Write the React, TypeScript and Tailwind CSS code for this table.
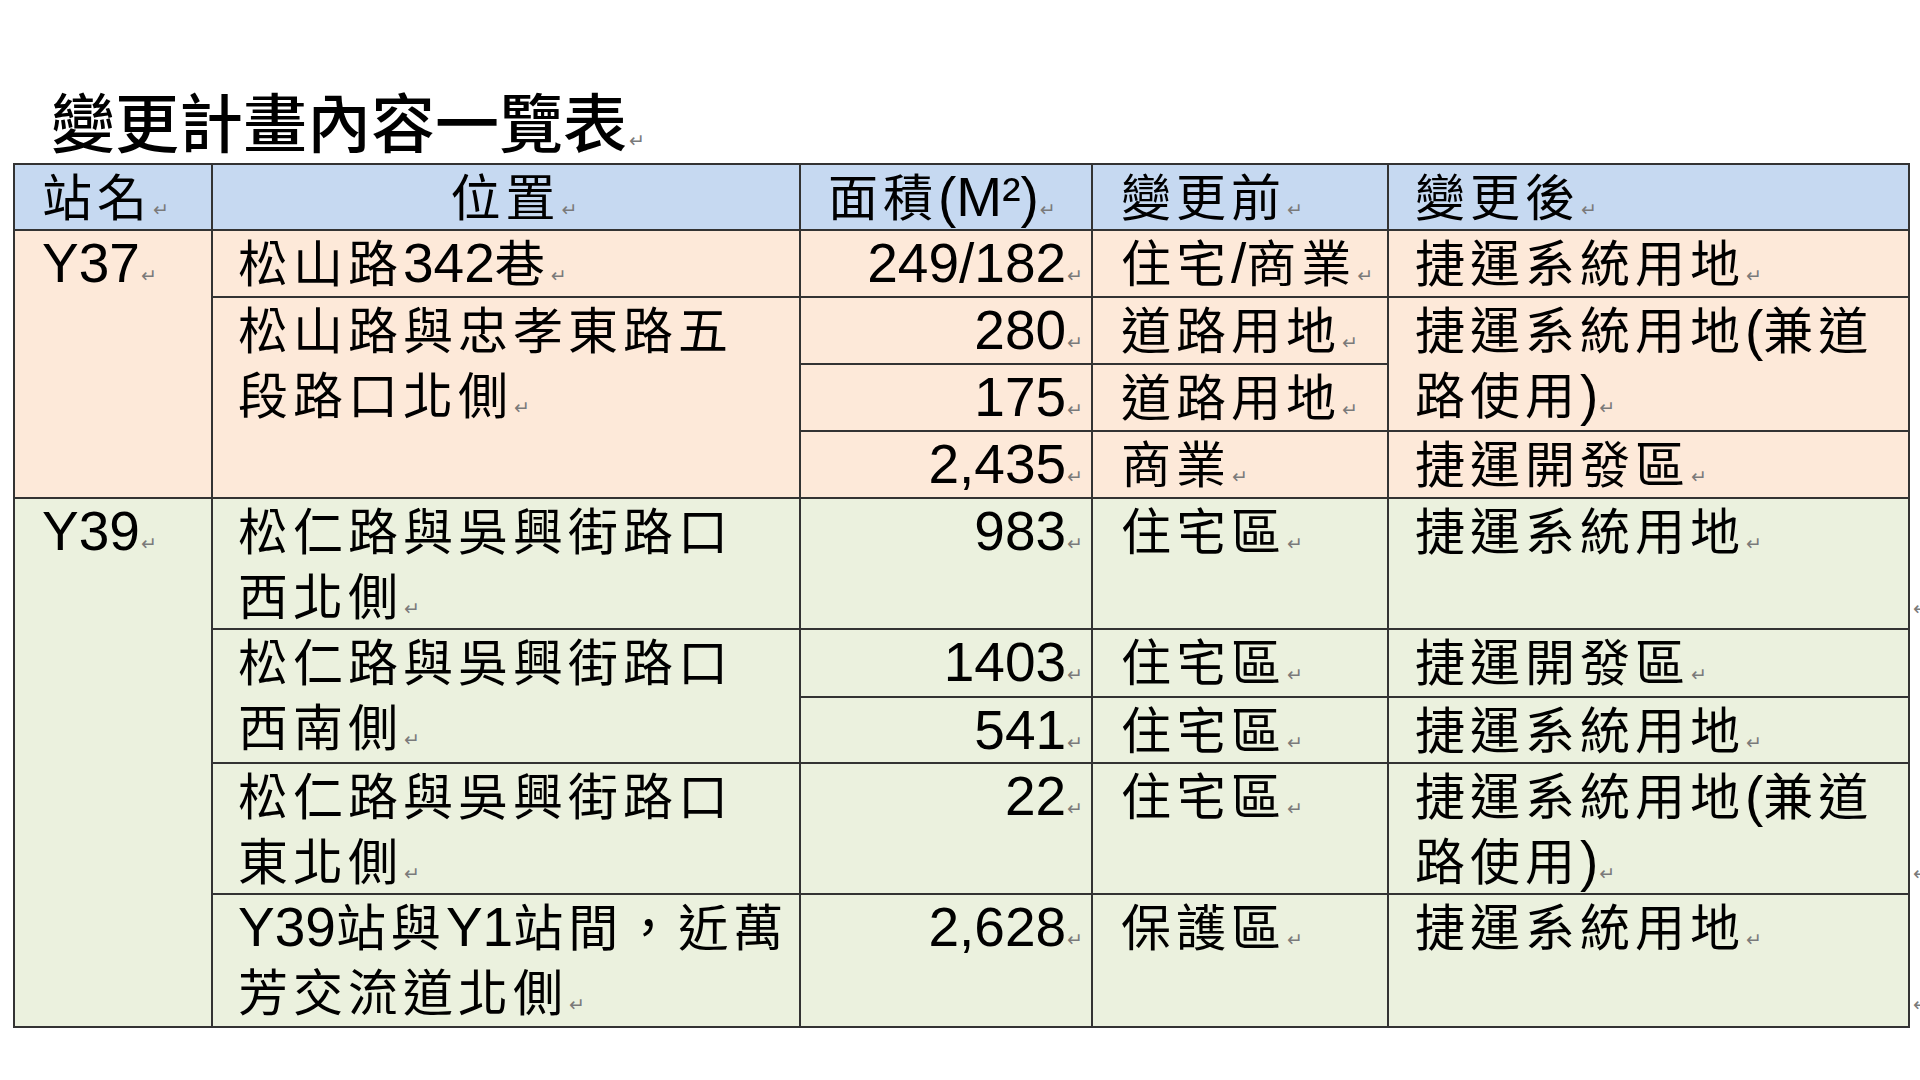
import React from "react";

const CJK = /([\u2E80-\u9FFF\uF900-\uFAFF\uFF00-\uFFEF\u3000-\u303F]+)/;

function Txt({ s }: { s: string }) {
  const parts = s.split(CJK).filter((p) => p.length > 0);
  return (
    <>
      {parts.map((p, i) =>
        CJK.test(p) ? (
          <span key={i} className="text-[50px] tracking-[5px] leading-none">
            {p}
          </span>
        ) : (
          <span key={i}>{p}</span>
        )
      )}
    </>
  );
}

function Mark() {
  return (
    <span className="ml-[1px] align-baseline text-[19px] leading-none text-[#7a7a7a] font-['DejaVu_Sans',sans-serif]">
      ↵
    </span>
  );
}

function Cell({
  className,
  lines,
}: {
  className: string;
  lines: string[];
}) {
  return (
    <div
      className={
        "border-l-2 border-t-2 border-[#333] text-[55px] leading-[65px] text-black overflow-hidden whitespace-nowrap " +
        className
      }
    >
      {lines.map((l, i) => (
        <div key={i}>
          <Txt s={l} />
          {i === lines.length - 1 && <Mark />}
        </div>
      ))}
    </div>
  );
}

export default function App() {
  const pink = "bg-[#fde9d9]";
  const green = "bg-[#ebf1de]";
  const head = "bg-[#c6d9f1]";
  return (
    <div className="w-[1920px] h-[1080px] bg-white overflow-hidden font-['Liberation_Sans','Noto_Sans_CJK_TC',sans-serif]">
      <div className="pt-[83px] pl-[51px]">
        <div className="h-[72px] text-[64px] leading-[72px] font-medium text-black font-['Noto_Sans_CJK_TC',sans-serif]">
          變更計畫內容一覽表
          <span className="ml-[2px] align-baseline text-[19px] font-normal leading-none text-[#7a7a7a] font-['DejaVu_Sans',sans-serif]">
            ↵
          </span>
        </div>
      </div>
      <div className="mt-[8px] ml-[13px] flex">
        <div className="grid grid-cols-[198px_588px_292px_296px_521px] grid-rows-[66px_67px_67px_67px_67px_131px_68px_66px_131px_133px] border-r-2 border-b-2 border-[#333]">
          {/* header */}
          <Cell className={`${head} col-start-1 row-start-1 pl-[27px]`} lines={["站名"]} />
          <Cell className={`${head} col-start-2 row-start-1 pl-[26px] pr-[10px] text-center`} lines={["位置"]} />
          <Cell className={`${head} col-start-3 row-start-1 pl-[27px]`} lines={["面積(M²)"]} />
          <Cell className={`${head} col-start-4 row-start-1 pl-[28px]`} lines={["變更前"]} />
          <Cell className={`${head} col-start-5 row-start-1 pl-[26px]`} lines={["變更後"]} />

          {/* station column */}
          <Cell className={`${pink} col-start-1 row-start-2 row-span-4 pl-[27px]`} lines={["Y37"]} />
          <Cell className={`${green} col-start-1 row-start-6 row-span-5 pl-[27px]`} lines={["Y39"]} />

          {/* location column */}
          <Cell className={`${pink} col-start-2 row-start-2 pl-[25px]`} lines={["松山路342巷"]} />
          <Cell className={`${pink} col-start-2 row-start-3 row-span-3 pl-[25px]`} lines={["松山路與忠孝東路五", "段路口北側"]} />
          <Cell className={`${green} col-start-2 row-start-6 pl-[25px]`} lines={["松仁路與吳興街路口", "西北側"]} />
          <Cell className={`${green} col-start-2 row-start-7 row-span-2 pl-[25px]`} lines={["松仁路與吳興街路口", "西南側"]} />
          <Cell className={`${green} col-start-2 row-start-9 pl-[25px]`} lines={["松仁路與吳興街路口", "東北側"]} />
          <Cell className={`${green} col-start-2 row-start-10 pl-[25px]`} lines={["Y39站與Y1站間，近萬", "芳交流道北側"]} />

          {/* area column */}
          <Cell className={`${pink} col-start-3 row-start-2 pr-[8px] text-right`} lines={["249/182"]} />
          <Cell className={`${pink} col-start-3 row-start-3 pr-[8px] text-right`} lines={["280"]} />
          <Cell className={`${pink} col-start-3 row-start-4 pr-[8px] text-right`} lines={["175"]} />
          <Cell className={`${pink} col-start-3 row-start-5 pr-[8px] text-right`} lines={["2,435"]} />
          <Cell className={`${green} col-start-3 row-start-6 pr-[8px] text-right`} lines={["983"]} />
          <Cell className={`${green} col-start-3 row-start-7 pr-[8px] text-right`} lines={["1403"]} />
          <Cell className={`${green} col-start-3 row-start-8 pr-[8px] text-right`} lines={["541"]} />
          <Cell className={`${green} col-start-3 row-start-9 pr-[8px] text-right`} lines={["22"]} />
          <Cell className={`${green} col-start-3 row-start-10 pr-[8px] text-right`} lines={["2,628"]} />

          {/* before column */}
          <Cell className={`${pink} col-start-4 row-start-2 pl-[28px]`} lines={["住宅/商業"]} />
          <Cell className={`${pink} col-start-4 row-start-3 pl-[28px]`} lines={["道路用地"]} />
          <Cell className={`${pink} col-start-4 row-start-4 pl-[28px]`} lines={["道路用地"]} />
          <Cell className={`${pink} col-start-4 row-start-5 pl-[28px]`} lines={["商業"]} />
          <Cell className={`${green} col-start-4 row-start-6 pl-[28px]`} lines={["住宅區"]} />
          <Cell className={`${green} col-start-4 row-start-7 pl-[28px]`} lines={["住宅區"]} />
          <Cell className={`${green} col-start-4 row-start-8 pl-[28px]`} lines={["住宅區"]} />
          <Cell className={`${green} col-start-4 row-start-9 pl-[28px]`} lines={["住宅區"]} />
          <Cell className={`${green} col-start-4 row-start-10 pl-[28px]`} lines={["保護區"]} />

          {/* after column */}
          <Cell className={`${pink} col-start-5 row-start-2 pl-[26px]`} lines={["捷運系統用地"]} />
          <Cell className={`${pink} col-start-5 row-start-3 row-span-2 pl-[26px]`} lines={["捷運系統用地(兼道", "路使用)"]} />
          <Cell className={`${pink} col-start-5 row-start-5 pl-[26px]`} lines={["捷運開發區"]} />
          <Cell className={`${green} col-start-5 row-start-6 pl-[26px]`} lines={["捷運系統用地"]} />
          <Cell className={`${green} col-start-5 row-start-7 pl-[26px]`} lines={["捷運開發區"]} />
          <Cell className={`${green} col-start-5 row-start-8 pl-[26px]`} lines={["捷運系統用地"]} />
          <Cell className={`${green} col-start-5 row-start-9 pl-[26px]`} lines={["捷運系統用地(兼道", "路使用)"]} />
          <Cell className={`${green} col-start-5 row-start-10 pl-[26px]`} lines={["捷運系統用地"]} />
        </div>
        {/* row-end marks outside the table */}
        <div className="grid grid-rows-[66px_67px_67px_67px_67px_131px_68px_66px_131px_133px] w-[10px] pl-[2px] text-[55px] leading-[65px]">
          <div className="row-start-6 pt-[2px]">
            <div>&nbsp;</div>
            <div><Mark /></div>
          </div>
          <div className="row-start-9 pt-[2px]">
            <div>&nbsp;</div>
            <div><Mark /></div>
          </div>
          <div className="row-start-10 pt-[2px]">
            <div>&nbsp;</div>
            <div><Mark /></div>
          </div>
        </div>
      </div>
    </div>
  );
}
